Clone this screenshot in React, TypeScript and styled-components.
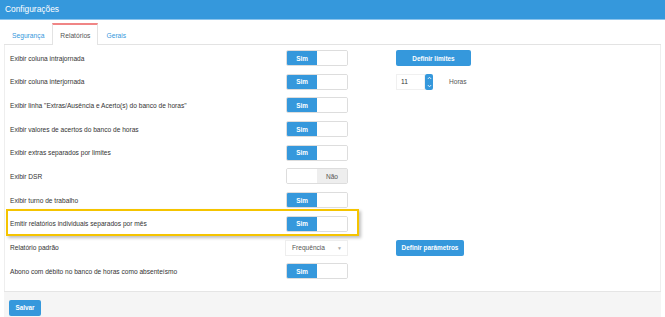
import styled, { createGlobalStyle } from 'styled-components';

const GlobalStyle = createGlobalStyle`
  body {
    margin: 0;
    background: #fff;
    font-family: "Liberation Sans", Arial, sans-serif;
  }
`;

const Header = styled.div`
  height: 19px;
  line-height: 19px;
  background: #3598dc;
  border-bottom: 1px solid #8cc4ec;
  color: #fff;
  font-size: 8.4px;
  padding-left: 5px;
`;

const Body = styled.div`
  padding: 3px 4px 0 4px;
`;

const TabList = styled.div`
  display: flex;
  border-bottom: 1px solid #e3e3e3;
  height: 21px;
`;

const Tab = styled.div<{ $active?: boolean }>`
  height: 21px;
  box-sizing: border-box;
  padding: 0 7px;
  line-height: 21px;
  font-size: 6.7px;
  color: ${(p) => (p.$active ? '#555' : '#3598dc')};
  background: #fff;
  border: 1px solid ${(p) => (p.$active ? '#e3e3e3' : 'transparent')};
  border-top: 2px solid ${(p) => (p.$active ? '#f08585' : 'transparent')};
  border-bottom: none;
  margin-bottom: ${(p) => (p.$active ? '-1px' : '0')};
  height: ${(p) => (p.$active ? '22px' : '21px')};
`;

const Panel = styled.div`
  border-left: 1px solid #eee;
  border-right: 1px solid #eee;
  padding: 5px 0 12px 5px;
  display: flex;
  flex-direction: column;
  gap: 7.7px;
`;

const Row = styled.div`
  position: relative;
  display: flex;
  align-items: center;
  height: 16px;
`;

const Highlight = styled.div`
  position: absolute;
  left: -4px;
  top: -7px;
  width: 349px;
  height: 23px;
  border: 2px solid #f5c400;
  box-shadow: 2px 2px 3px rgba(0, 0, 0, 0.25);
  pointer-events: none;
`;

const Label = styled.div`
  width: 276px;
  font-size: 6.6px;
  color: #333;
`;

const Toggle = styled.div`
  width: 62px;
  height: 16px;
  box-sizing: border-box;
  border: 1px solid #ddd;
  border-radius: 2px;
  display: flex;
  overflow: hidden;
`;

const ToggleOn = styled.div`
  width: 30px;
  background: #3598dc;
  color: #fff;
  font-size: 6.4px;
  font-weight: bold;
  display: flex;
  align-items: center;
  justify-content: center;
`;

const ToggleOff = styled.div`
  flex: 1;
  background: #eee;
  color: #555;
  font-size: 6.6px;
  display: flex;
  align-items: center;
  justify-content: center;
`;

const Blank = styled.div`
  flex: 1;
  background: #fff;
`;

const Extra = styled.div`
  margin-left: 48px;
  display: flex;
  align-items: center;
`;

const Button = styled.button<{ $w: number }>`
  width: ${(p) => p.$w}px;
  height: 16px;
  border: none;
  border-radius: 2px;
  background: #3598dc;
  color: #fff;
  font-family: "Liberation Sans", Arial, sans-serif;
  font-size: 6.4px;
  font-weight: bold;
  padding: 0;
`;

const Spinner = styled.div`
  display: flex;
  height: 16px;
`;

const SpinInput = styled.div`
  width: 29px;
  box-sizing: border-box;
  border: 1px solid #f0f0f0;
  font-size: 6.6px;
  color: #333;
  padding-left: 4px;
  display: flex;
  align-items: center;
`;

const SpinArrows = styled.div`
  width: 8px;
  background: #3598dc;
  border-radius: 2px;
  display: flex;
  flex-direction: column;
  align-items: center;
  justify-content: space-around;
`;

const Unit = styled.div`
  margin-left: 16px;
  font-size: 6.6px;
  color: #555;
`;

const Select = styled.div`
  width: 63px;
  height: 16px;
  box-sizing: border-box;
  margin-left: -1px;
  border: 1px solid #eee;
  display: flex;
  align-items: center;
  justify-content: space-between;
  padding: 0 5px 0 6px;
  font-size: 6.6px;
  color: #555;
`;

const Caret = styled.span`
  font-size: 5px;
  color: #aaa;
`;

const Footer = styled.div`
  border-top: 1px solid #e5e5e5;
  background: #f5f5f5;
  padding: 4px 5px 0 5px;
  height: 26px;
  box-sizing: border-box;
`;

const Switch = ({ on }: { on: boolean }) =>
  on ? (
    <Toggle>
      <ToggleOn>Sim</ToggleOn>
      <Blank />
    </Toggle>
  ) : (
    <Toggle>
      <Blank />
      <ToggleOff>Não</ToggleOff>
    </Toggle>
  );

const Chevron = ({ up }: { up?: boolean }) => (
  <svg width="5" height="4" viewBox="0 0 5 4">
    <path
      d={up ? 'M0.8 3 L2.5 1.2 L4.2 3' : 'M0.8 1 L2.5 2.8 L4.2 1'}
      fill="none"
      stroke="#fff"
      strokeWidth="0.8"
    />
  </svg>
);

export default function App() {
  return (
    <>
      <GlobalStyle />
      <Header>Configurações</Header>
      <Body>
        <TabList>
          <Tab>Segurança</Tab>
          <Tab $active>Relatórios</Tab>
          <Tab>Gerais</Tab>
        </TabList>
        <Panel>
          <Row>
            <Label>Exibir coluna intrajornada</Label>
            <Switch on />
            <Extra>
              <Button $w={75}>Definir limites</Button>
            </Extra>
          </Row>
          <Row>
            <Label>Exibir coluna interjornada</Label>
            <Switch on />
            <Extra>
              <Spinner>
                <SpinInput>11</SpinInput>
                <SpinArrows>
                  <Chevron up />
                  <Chevron />
                </SpinArrows>
              </Spinner>
              <Unit>Horas</Unit>
            </Extra>
          </Row>
          <Row>
            <Label>Exibir linha "Extras/Ausência e Acerto(s) do banco de horas"</Label>
            <Switch on />
          </Row>
          <Row>
            <Label>Exibir valores de acertos do banco de horas</Label>
            <Switch on />
          </Row>
          <Row>
            <Label>Exibir extras separados por limites</Label>
            <Switch on />
          </Row>
          <Row>
            <Label>Exibir DSR</Label>
            <Switch on={false} />
          </Row>
          <Row>
            <Label>Exibir turno de trabalho</Label>
            <Switch on />
          </Row>
          <Row>
            <Highlight />
            <Label>Emitir relatórios individuais separados por mês</Label>
            <Switch on />
          </Row>
          <Row>
            <Label>Relatório padrão</Label>
            <Select>
              Frequência
              <Caret>▼</Caret>
            </Select>
            <Extra>
              <Button $w={68}>Definir parâmetros</Button>
            </Extra>
          </Row>
          <Row>
            <Label>Abono com débito no banco de horas como absenteísmo</Label>
            <Switch on />
          </Row>
        </Panel>
        <Footer>
          <Button $w={32}>Salvar</Button>
        </Footer>
      </Body>
    </>
  );
}
